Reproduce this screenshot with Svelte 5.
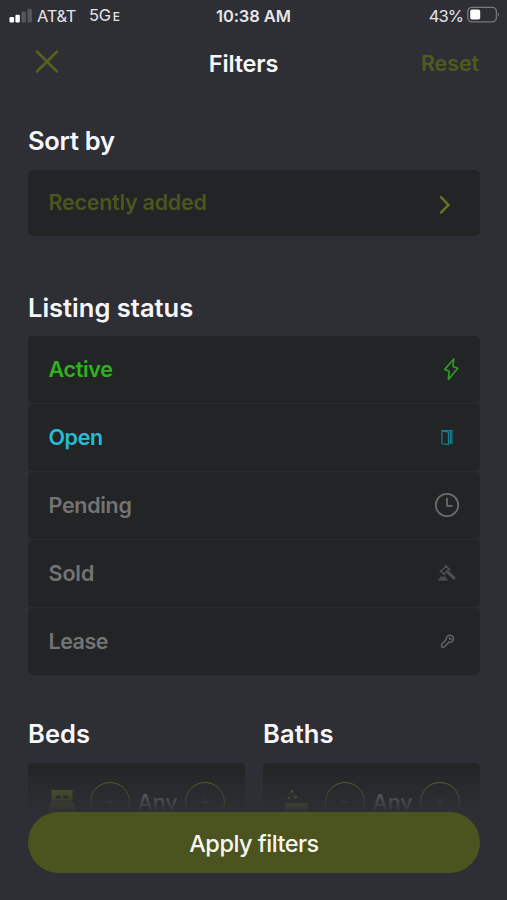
<script>
  const statuses = [
    { label: 'Active', icon: 'bolt', color: '#2eb31f', ls: -0.3 },
    { label: 'Open', icon: 'door', color: '#23bdd6', ls: -0.4 },
    { label: 'Pending', icon: 'clock', color: '#737474', ls: -0.3 },
    { label: 'Sold', icon: 'gavel', color: '#737474', ls: -0.1 },
    { label: 'Lease', icon: 'key', color: '#737474', ls: -0.5 }
  ];
  const counters = [
    { title: 'Beds', icon: 'bed' },
    { title: 'Baths', icon: 'bath' }
  ];
</script>

<div class="screen">
  <div class="statusbar">
    <svg class="signal" width="24" height="16" viewBox="0 0 24 16">
      <rect x="0.5" y="9" width="4.6" height="5.5" rx="1.3" fill="#fff" />
      <rect x="6.4" y="6.7" width="4.4" height="7.8" rx="1.3" fill="#fff" />
      <rect x="12.5" y="3.5" width="4.4" height="11" rx="1.3" fill="#55565b" />
      <rect x="18.5" y="0.8" width="4.4" height="13.7" rx="1.3" fill="#55565b" />
    </svg>
    <span class="carrier">AT&amp;T</span>
    <span class="network">5G<small>E</small></span>
    <span class="time">10:38 AM</span>
    <span class="percent">43%</span>
    <svg class="battery" width="34" height="18" viewBox="0 0 34 18">
      <rect x="0.8" y="1.3" width="28.6" height="14.6" rx="4.2" fill="none" stroke="#77787c" stroke-width="1.3" />
      <rect x="3.2" y="3.6" width="10" height="10" rx="1.8" fill="#fff" />
      <path d="M30.8 6.2q2.2 2.4 0 4.8z" fill="#77787c" />
    </svg>
  </div>

  <header>
    <svg width="24" height="24" viewBox="0 0 24 24" fill="none" stroke="#59611e" stroke-width="2.5" stroke-linecap="round">
      <path d="M2 1.5 22 21.5M22 1.5 2 21.5" />
    </svg>
    <h1>Filters</h1>
    <span class="reset">Reset</span>
  </header>

  <main>
    <section>
      <h2>Sort by</h2>
      <div class="row olive">
        <span>Recently added</span>
        <svg class="chev" width="12" height="20" viewBox="0 0 12 20" fill="none" stroke="#68721f" stroke-width="2.5" stroke-linecap="round">
          <path d="M2 2.2 9.5 10 2 17.6" />
        </svg>
      </div>
    </section>

    <section class="listing">
      <h2>Listing status</h2>
      <div class="rows">
        {#each statuses as s}
          <div class="row" style:color={s.color}>
            <span style:letter-spacing="{s.ls}px">{s.label}</span>
            <i>
              {#if s.icon === 'bolt'}
                <svg class="bolt" width="17" height="25" viewBox="0 0 17 25" fill="none" stroke="#2f9f22" stroke-width="1.6" stroke-linejoin="round">
                  <path d="M10.8 2 1.7 12.4 6.2 14.2 5.3 22.4 14.8 11.3 10 9.6z" />
                </svg>
              {:else if s.icon === 'door'}
                <svg width="12" height="17" viewBox="0 0 12 17" fill="none" stroke="#197f95" stroke-width="1.2">
                  <path d="M1 1.7h9.9v12.5H8.4" />
                  <path d="M1 1.7 7.4 3.2v12.3L1 14.8z" />
                  <path d="M9.4 2v12" stroke-width="1.2" />
                </svg>
              {:else if s.icon === 'clock'}
                <svg width="26" height="26" viewBox="0 0 26 26" fill="none" stroke="#6d6e6e" stroke-width="1.7">
                  <circle cx="13" cy="13" r="11.2" />
                  <path d="M13 5.8v8h5.5" />
                </svg>
              {:else if s.icon === 'gavel'}
                <svg width="18" height="18" viewBox="0 0 18 18" fill="none" stroke="#505152" stroke-width="1.4" stroke-linecap="round">
                  <path d="M3 7.2 8.2 2.2 11 5 5.8 10zM2.1 6.5l4.3 4.3M7.5 1.4l4.3 4.3" />
                  <path d="M9.7 8 16 14" stroke-width="3" />
                  <path d="M1.2 15.7h7.4M2.6 13.7h4.8" stroke-width="1.7" />
                </svg>
              {:else}
                <svg width="15" height="15" viewBox="0 0 15 15" fill="none" stroke="#626363" stroke-width="1.5" stroke-linejoin="round">
                  <path d="M6 5.8C5.8 3.2 7.9 1.2 10.2 1.3c3 .2 4.3 3.4 2.6 5.5-1 1.3-2.5 1.6-3.8 1.3L4.6 12.7 1.8 13.2 1.5 10.4z" />
                  <path d="M9.6 3.2v1.9h2.2" />
                </svg>
              {/if}
            </i>
          </div>
        {/each}
      </div>
    </section>

    <div class="counters">
      {#each counters as c}
        <section>
          <h2>{c.title}</h2>
          <div class="counter">
            {#if c.icon === 'bed'}
              <svg width="28" height="26" viewBox="0 0 28 26" fill="#68721f">
                <path fill-rule="evenodd" d="M3.5 1h21v10.5h-21zM8 6.5v3h4.8v-3zM15 6.5v3h4.8v-3z" />
                <path d="M3 12.5h22l2 6v6H1v-6z" />
              </svg>
            {:else}
              <svg width="28" height="26" viewBox="0 0 28 26" fill="#7c8724">
                <circle cx="9.2" cy="2.6" r="1.4" /><circle cx="6" cy="9" r="1.3" /><circle cx="12.5" cy="8" r="1.5" /><circle cx="6.5" cy="5" r=".8" /><circle cx="10" cy="6" r=".8" />
                <path d="M2 14h23v4q-2 5-6 5H8q-5 0-6-5z" />
              </svg>
            {/if}
            <span class="circle"><svg width="8" height="8"><path d="M0 4h8" stroke="#4b5320" stroke-width="1.5" /></svg></span>
            <span class="any">Any</span>
            <span class="circle"><svg width="8" height="8"><path d="M0 4h8M4 0v8" stroke="#4b5320" stroke-width="1.5" /></svg></span>
          </div>
        </section>
      {/each}
    </div>
  </main>

  <div class="footer">
    <div class="fade"></div>
    <div class="bar"><button>Apply filters</button></div>
  </div>
</div>

<style>
  :global(body) { background: #2e2f34; overflow: hidden; }
  .screen {
    position: relative; width: 507px; height: 900px; overflow: hidden; background: #2e2f34;
    font-family: Inter, "Liberation Sans", sans-serif; color: #f7f7fa;
  }
  svg { display: block; flex: none; }
  .statusbar {
    display: grid; grid-template-columns: 28px 52px 127px 1fr auto 33px; align-items: center;
    height: 30px; padding: 0 7px 0 9px; font-size: 16.5px; line-height: 30px; color: #e5e5e8; white-space: nowrap;
  }
  .signal { margin-top: -1px; }
  .carrier { letter-spacing: -0.3px; }
  .network { letter-spacing: -0.3px; }
  small { font-size: 12px; font-weight: 500; margin-left: 2px; }
  .time { font-weight: 600; letter-spacing: -0.1px; }
  .percent { letter-spacing: -0.9px; margin-right: 4px; }
  .battery { margin-top: -3px; }
  header { display: grid; grid-template-columns: 110px 1fr 110px; align-items: center; height: 66px; padding: 0 28px 0 35px; }
  header svg { margin-top: -3px; }
  h1 { margin: 0 0 0 -27px; text-align: center; font-size: 23.5px; font-weight: 600; letter-spacing: -0.2px; }
  .reset { text-align: right; font-size: 21.5px; font-weight: 600; color: #505a1e; letter-spacing: -0.1px; }
  main { padding: 0 27px 0 28px; }
  h2 { margin: 0; height: 44px; line-height: 44px; font-size: 25.5px; font-weight: 600; letter-spacing: 0; white-space: nowrap; }
  main > section:first-child { padding-top: 23px; }
  main > section:first-child h2 { height: 50.5px; letter-spacing: -0.25px; }
  .row {
    display: flex; align-items: center; justify-content: space-between; height: 66.5px; box-sizing: border-box;
    padding: 0 20px 0 20.5px; border-radius: 5px; background: #232425; font-size: 21.5px; font-weight: 600;
  }
  .olive { color: #4b551f; letter-spacing: -0.25px; }
  .olive span { margin-top: -1px; }
  .chev { margin: 5px 9px 0 0; }
  .listing { padding-top: 50px; }
  .listing h2 { height: 50px; }
  .rows { display: flex; flex-direction: column; gap: 1.5px; background: #2b2c2f; border-radius: 5px; }
  .row i { display: flex; justify-content: center; width: 26px; }
  .bolt { position: relative; left: 4px; }
  .counters { display: grid; grid-template-columns: 217px 217px; gap: 18px; padding-top: 37px; }
  .counters h2 { height: 51px; letter-spacing: 0.1px; }
  .counter { display: flex; align-items: flex-start; height: 80px; border-radius: 4px; background: #232425; padding: 19px 0 0 20px; box-sizing: border-box; }
  .counter > svg { margin: 7px 14px 0 0; }
  .circle { display: flex; align-items: center; justify-content: center; width: 40px; height: 40px; box-sizing: border-box; border: 1.5px solid #737e22; border-radius: 50%; }
  .any { width: 55px; text-align: center; font-size: 21.5px; line-height: 40px; font-weight: 500; color: #a0a1a3; }
  .footer { position: absolute; left: 0; right: 0; bottom: 0; }
  .fade { height: 50px; background: linear-gradient(rgba(46, 47, 52, 0), #2e2f34); }
  .bar { height: 88px; padding: 0 27px 0 28px; background: #2e2f34; }
  button {
    display: block; width: 100%; height: 61px; border: 0; padding: 2px 0 0; border-radius: 31px; background: #4b531e; color: #f7f7f2;
    font: 500 23.5px Inter, "Liberation Sans", sans-serif; letter-spacing: -0.5px;
  }
</style>
